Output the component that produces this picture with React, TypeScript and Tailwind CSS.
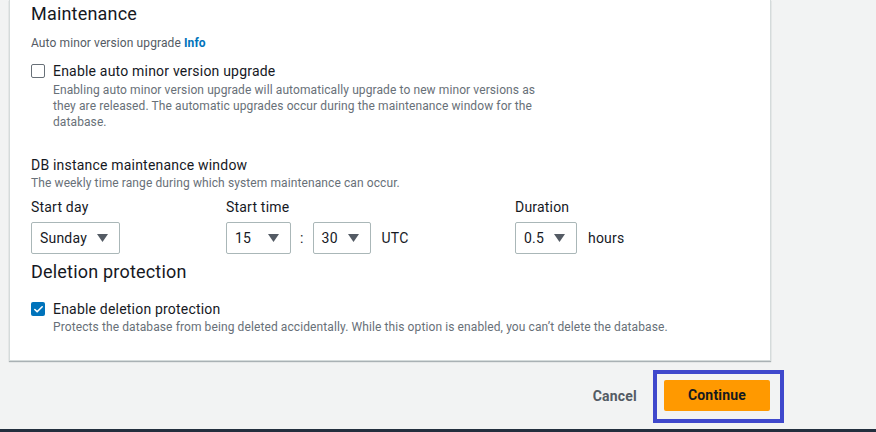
import { Check } from 'lucide-react';

type Opt = { value: string; width: string };

function Select({ value, width }: Opt) {
  return (
    <div
      className={`${width} h-[32px] flex items-center justify-between pl-[8px] pr-[11px] border border-[#aab7b8] rounded-[2px] bg-white text-[14px] tracking-[0.2px] text-[#16191f]`}
    >
      <span>{value}</span>
      <svg width="11" height="8" viewBox="0 0 11 8">
        <path d="M0 0 H11 L5.5 8 Z" fill="#545b64" />
      </svg>
    </div>
  );
}

function Checkbox({ checked }: { checked?: boolean }) {
  if (checked) {
    return (
      <div className="w-[14px] h-[14px] rounded-[2px] bg-[#0073bb] flex items-center justify-center shrink-0">
        <Check size={11} strokeWidth={3.5} color="#ffffff" />
      </div>
    );
  }
  return <div className="w-[14px] h-[14px] rounded-[2px] border border-[#687078] bg-white shrink-0" />;
}

export default function App() {
  return (
    <div
      className="h-[432px] w-[876px] bg-[#f2f3f3] flex flex-col overflow-hidden"
      style={{ fontFamily: 'Roboto, "Liberation Sans", sans-serif' }}
    >
      {/* Settings panel, top scrolled out of view */}
      <div className="ml-[9px] w-[762px] bg-white border-x border-b border-[#d5dbdb] shadow-[0_1px_1px_0_rgba(0,28,36,0.3)] pt-[2px] pb-[25px] px-[21px]">
        <h2 className="text-[18px] leading-[24px] tracking-[0.2px] text-[#16191f]">Maintenance</h2>

        <div className="mt-[9px] text-[12px] leading-[16px] tracking-[0.1px] text-[#545b64]">
          Auto minor version upgrade <span className="font-bold text-[#0073bb]">Info</span>
        </div>

        <div className="mt-[10px] flex gap-[8px]">
          <div className="pt-[3px]">
            <Checkbox />
          </div>
          <div>
            <div className="text-[14px] leading-[20px] tracking-[0.2px] text-[#16191f]">
              Enable auto minor version upgrade
            </div>
            <p className="mt-[1px] w-[494px] text-[12px] leading-[16px] tracking-[0.1px] text-[#687078]">
              Enabling auto minor version upgrade will automatically upgrade to new minor versions as they are
              released. The automatic upgrades occur during the maintenance window for the database.
            </p>
          </div>
        </div>

        <div className="mt-[25px] text-[14px] leading-[20px] tracking-[0.2px] text-[#16191f]">
          DB instance maintenance window
        </div>
        <div className="text-[12px] leading-[16px] tracking-[0.1px] text-[#687078]">
          The weekly time range during which system maintenance can occur.
        </div>

        <div className="mt-[6px] flex text-[14px] tracking-[0.2px] text-[#16191f]">
          <div className="w-[195px]">
            <div className="leading-[20px]">Start day</div>
            <div className="mt-[5px]">
              <Select value="Sunday" width="w-[89px]" />
            </div>
          </div>
          <div className="w-[289px]">
            <div className="leading-[20px]">Start time</div>
            <div className="mt-[5px] flex items-center">
              <Select value="15" width="w-[65px]" />
              <span className="mx-[9px]">:</span>
              <Select value="30" width="w-[58px]" />
              <span className="ml-[11px]">UTC</span>
            </div>
          </div>
          <div>
            <div className="leading-[20px]">Duration</div>
            <div className="mt-[5px] flex items-center">
              <Select value="0.5" width="w-[62px]" />
              <span className="ml-[11px]">hours</span>
            </div>
          </div>
        </div>

        <h2 className="mt-[6px] text-[18px] leading-[24px] tracking-[0.2px] text-[#16191f]">Deletion protection</h2>

        <div className="mt-[15px] flex gap-[8px]">
          <div className="pt-[3px]">
            <Checkbox checked />
          </div>
          <div>
            <div className="text-[14px] leading-[20px] tracking-[0.2px] text-[#16191f]">Enable deletion protection</div>
            <p className="text-[12px] leading-[16px] tracking-[0.1px] text-[#687078]">
              Protects the database from being deleted accidentally. While this option is enabled, you can’t delete
              the database.
            </p>
          </div>
        </div>
      </div>

      {/* Form actions */}
      <div className="mt-[9px] flex items-center justify-end pr-[92px]">
        <button className="text-[14px] font-bold tracking-[0.2px] text-[#545b64] mr-[16px]">Cancel</button>
        <div className="border-[4px] border-[#3f48cc] pt-[6px] pb-[8px] pl-[7px] pr-[10px]">
          <button className="w-[106px] h-[31px] rounded-[2px] bg-[#ff9900] text-[14px] font-bold tracking-[0.2px] text-[#16191f]">
            Continue
          </button>
        </div>
      </div>

      <div className="mt-auto h-[3px] bg-[#232f3e]" />
    </div>
  );
}
